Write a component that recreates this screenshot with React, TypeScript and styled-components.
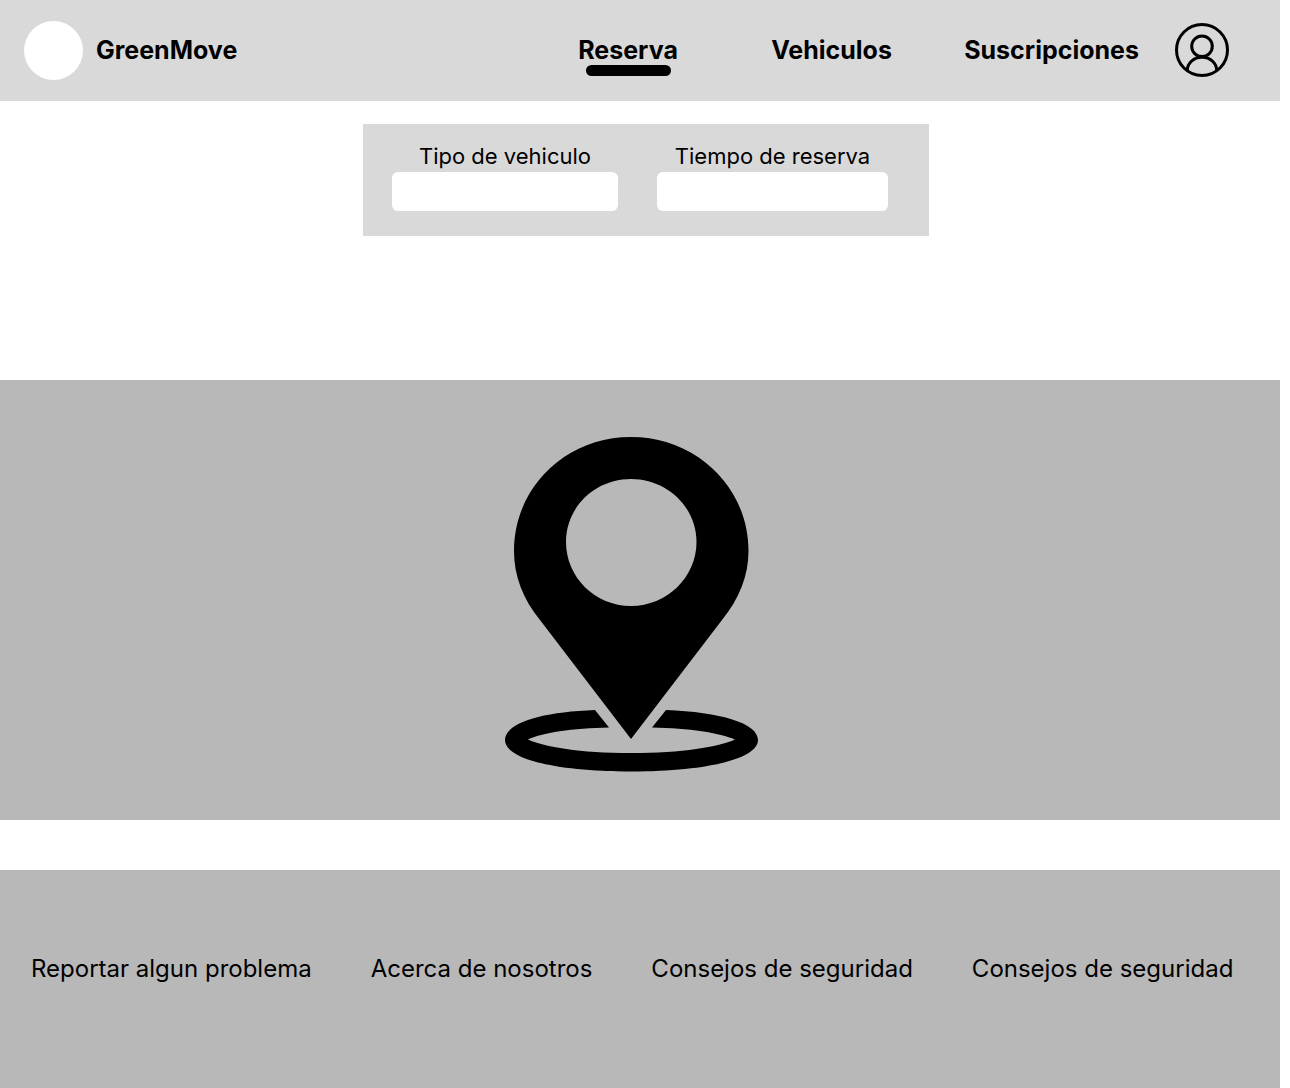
import React from "react";
import styled, { createGlobalStyle } from "styled-components";

const GlobalStyle = createGlobalStyle`
  *, *::before, *::after { box-sizing: border-box; }
  body {
    margin: 0;
    background: #ffffff;
    color: #000000;
    font-family: Inter, "Liberation Sans", sans-serif;
  }
`;

const Page = styled.div`
  display: flex;
  flex-direction: column;
  min-height: 100vh;
`;

const Header = styled.header`
  display: flex;
  align-items: center;
  justify-content: space-between;
  margin-right: 10px;
  padding: 21px 51px 21px 24px;
  background: #d9d9d9;
`;

const Brand = styled.a`
  display: flex;
  align-items: center;
  gap: 13px;
  color: inherit;
  font-size: 25px;
  font-weight: 700;
  line-height: 30px;
  text-decoration: none;
`;

const BrandName = styled.span`
  padding-bottom: 2px;
`;

const Logo = styled.span`
  width: 59px;
  height: 59px;
  border-radius: 50%;
  background: #ffffff;
`;

const HeaderActions = styled.div`
  display: flex;
  align-items: center;
  gap: 36px;
  padding-bottom: 2px;
`;

const Nav = styled.nav`
  display: grid;
  grid-template-columns: 193px 193px auto;
  justify-items: start;
`;

const NavLink = styled.a<{ $active?: boolean }>`
  position: relative;
  color: inherit;
  font-size: 25px;
  font-weight: 700;
  line-height: 30px;
  text-decoration: none;

  &::after {
    content: "";
    display: ${({ $active }) => ($active ? "block" : "none")};
    position: absolute;
    top: 100%;
    left: 8px;
    right: 7px;
    height: 11px;
    border-radius: 6px;
    background: #000000;
  }
`;

const ProfileButton = styled.button`
  display: flex;
  padding: 0;
  border: 0;
  background: none;
  color: inherit;
  cursor: pointer;
`;

const Search = styled.form`
  display: flex;
  align-self: center;
  gap: 39px;
  margin: 23px 0 144px 2px;
  padding: 18px 41px 25px 29px;
  background: #d9d9d9;
`;

const Field = styled.div<{ $width: number }>`
  display: flex;
  flex-direction: column;
  gap: 2px;
  width: ${({ $width }) => $width}px;
`;

const Label = styled.label`
  font-size: 22px;
  line-height: 28px;
  text-align: center;
`;

const controlStyle = `
  width: 100%;
  height: 39px;
  padding: 0 12px;
  border: 0;
  border-radius: 6px;
  background: #ffffff;
  color: #000000;
  font: inherit;
  appearance: none;
`;

const Select = styled.select`${controlStyle}`;
const Input = styled.input`${controlStyle}`;

const MapArea = styled.main`
  display: flex;
  justify-content: center;
  margin-right: 10px;
  padding: 56px 18px 48px 0;
  background: #b8b8b8;
`;

const Footer = styled.footer`
  display: flex;
  flex: 1;
  align-items: flex-start;
  gap: 59px;
  margin: 50px 10px 0 0;
  padding: 84px 31px;
  background: #b8b8b8;
`;

const FooterLink = styled.a`
  color: inherit;
  font-size: 24px;
  line-height: 30px;
  text-decoration: none;
  white-space: nowrap;
`;

const UserIcon = () => (
  <svg width="54" height="54" viewBox="0 0 54 54" fill="none" stroke="currentColor" strokeWidth="3" aria-hidden="true">
    <circle cx="27" cy="27" r="25.5" />
    <circle cx="27" cy="23.300" r="10.300" />
    <path d="M12.300 47.500C12.300 40 18.800 34.300 27 34.300S41.700 40 41.700 47.500" />
  </svg>
);

const PinIcon = () => (
  <svg width="256" height="336" viewBox="0 0 256 336" role="img" aria-label="Mapa">
    <path
      fillRule="evenodd"
      d="M128 303L37 184C20 163 11 140 11 115C11 51 63 1 128 1S245.500 51 245.500 115C245.500 140 236 163 219 184ZM128 43C92 43 63 71 63 106S92 170 128 170S193.500 141 193.500 106S164 43 128 43Z"
    />
    <path d="M92 274L106 291.500C70 292 38 297 25 303.500C42 311 76 317 128 317S215 311 232 303.500C217 297 186 292 149 291.500L163 274C217 276 255 287 255 304C255 323 203 335.500 128 335.500S2 323 2 304C2 287 38 276 92 274Z" />
  </svg>
);

const navItems = ["Reserva", "Vehiculos", "Suscripciones"];

const footerItems = [
  "Reportar algun problema",
  "Acerca de nosotros",
  "Consejos de seguridad",
  "Consejos de seguridad",
];

export default function App() {
  return (
    <>
      <GlobalStyle />
      <Page>
        <Header>
          <Brand href="#">
            <Logo />
            <BrandName>GreenMove</BrandName>
          </Brand>
          <HeaderActions>
            <Nav>
              {navItems.map((item, index) => (
                <NavLink key={item} href="#" $active={index === 0}>
                  {item}
                </NavLink>
              ))}
            </Nav>
            <ProfileButton type="button" aria-label="Perfil">
              <UserIcon />
            </ProfileButton>
          </HeaderActions>
        </Header>
        <Search>
          <Field $width={226}>
            <Label htmlFor="tipo">Tipo de vehiculo</Label>
            <Select id="tipo" />
          </Field>
          <Field $width={231}>
            <Label htmlFor="tiempo">Tiempo de reserva</Label>
            <Input id="tiempo" type="text" />
          </Field>
        </Search>
        <MapArea>
          <PinIcon />
        </MapArea>
        <Footer>
          {footerItems.map((item, index) => (
            <FooterLink key={index} href="#">
              {item}
            </FooterLink>
          ))}
        </Footer>
      </Page>
    </>
  );
}
